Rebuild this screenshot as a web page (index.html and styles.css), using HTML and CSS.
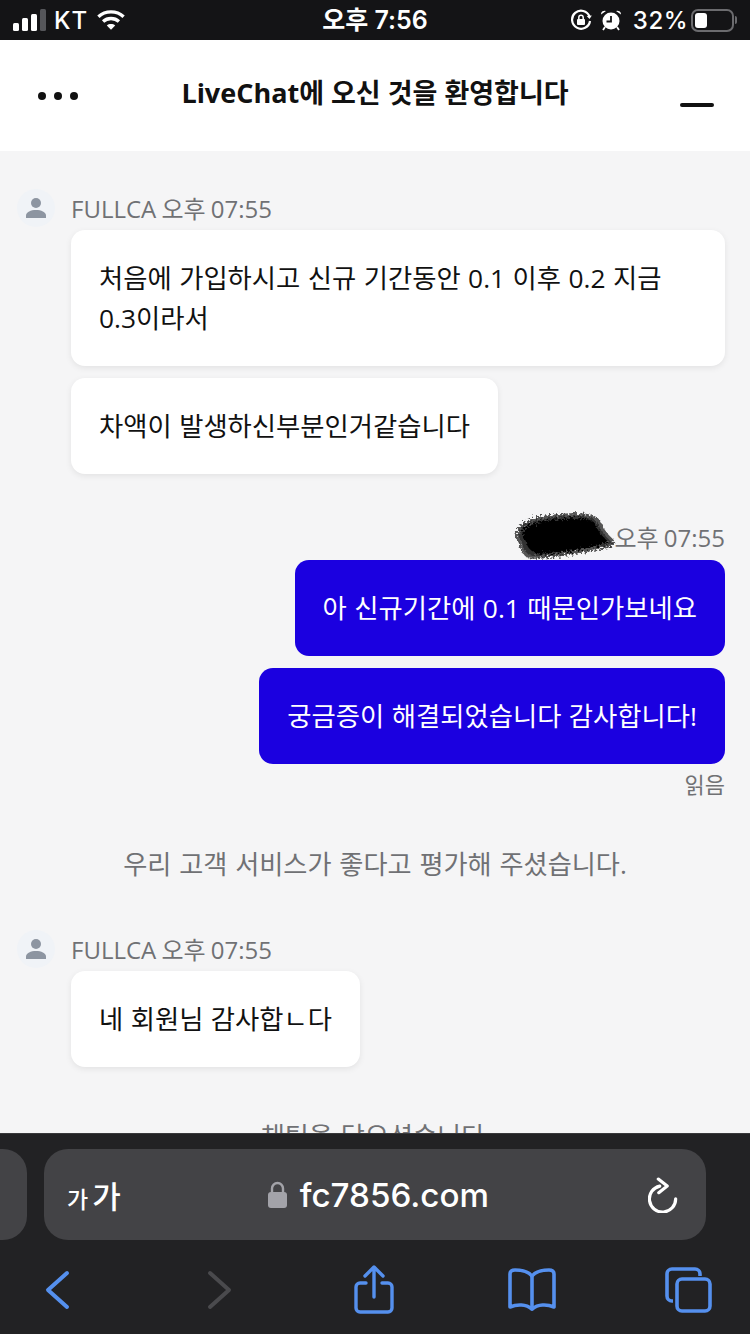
FILE: index.html
```html
<!DOCTYPE html>
<html lang="ko">
<head>
  <meta charset="UTF-8" />
  <title>LiveChat</title>
  <meta name="viewport" content="width=device-width, initial-scale=1.0" />
  <link rel="stylesheet" href="styles.css">
</head>
<body>
<div class="phone">

  <div class="status-bar">
    <div class="status-left">
      <svg class="signal" width="34" height="22" viewBox="0 0 34 22">
        <rect x="0" y="14" width="6" height="8" rx="1.5" fill="#fff"/>
        <rect x="9" y="9" width="6" height="13" rx="1.5" fill="#fff"/>
        <rect x="18" y="5" width="6" height="17" rx="1.5" fill="#fff"/>
        <rect x="27" y="0" width="6" height="22" rx="1.5" fill="#55565a"/>
      </svg>
      <span class="carrier">KT</span>
      <svg width="28" height="22" viewBox="0 0 30 22" fill="none" stroke="#fff" stroke-width="3.6">
        <path d="M1.5 7.5c7.500-7 19.500-7 27 0"/>
        <path d="M6.500 12.500c4.700-4.200 12.300-4.200 17 0"/>
        <path d="M15 21.500l-4.500-4.700c2.500-2 6.500-2 9 0z" fill="#fff" stroke="none"/>
      </svg>
    </div>
    <div class="status-time">오후 7:56</div>
    <div class="status-right">
      <svg width="22" height="22" viewBox="0 0 22 22" fill="none" stroke="#fff" stroke-width="2.200">
        <path d="M19.500 7.500A9 9 0 1 0 20 12"/>
        <path d="M21.800 6.500l-2.300 3.600-2.800-3.200z" fill="#fff" stroke="none"/>
        <rect x="7" y="10" width="8" height="6" rx="1" fill="#fff" stroke="none"/>
        <path d="M8.800 10V8.500a2.200 2.200 0 0 1 4.400 0V10" stroke-width="1.500"/>
      </svg>
      <svg width="22" height="22" viewBox="0 0 22 22">
        <circle cx="11" cy="12" r="8.500" fill="#fff"/>
        <path d="M11 7v5.500H6.500" fill="none" stroke="#141416" stroke-width="1.800"/>
        <path d="M1 5.500a3.600 3.600 0 0 1 5-3.500zM21 5.500a3.600 3.600 0 0 0-5-3.500z" fill="#fff"/>
        <path d="M5 18l-2 3M17 18l2 3" stroke="#fff" stroke-width="1.800"/>
      </svg>
      <span class="battery-pct">32%</span>
      <div class="battery"><div class="battery-level"></div></div>
      <div class="battery-cap"></div>
    </div>
  </div>

  <div class="chat-header">
    <div class="dots"><span></span><span></span><span></span></div>
    <h1 class="chat-title">LiveChat에 오신 것을 환영합니다</h1>
    <div class="minimize"></div>
  </div>

  <div class="chat-body">

    <div class="group">
      <div class="meta">
        <div class="avatar">
          <svg width="20" height="20" viewBox="0 0 20 20" fill="#8d95a1">
            <circle cx="10" cy="5" r="5"/>
            <path d="M0 20v-2.500c0-3.500 5-5.500 10-5.500s10 2 10 5.500V20z"/>
          </svg>
        </div>
        <span class="meta-text">FULLCA 오후 07:55</span>
      </div>
      <div class="bubble">처음에 가입하시고 신규 기간동안 0.1 이후 0.2 지금 0.3이라서</div>
      <div class="bubble">차액이 발생하신부분인거같습니다</div>
    </div>

    <div class="group group-me">
      <div class="meta meta-me">
        <svg class="scribble" width="110" height="54" viewBox="0 0 104 56" preserveAspectRatio="none">
          <defs>
            <filter id="rough" x="-10%" y="-10%" width="120%" height="120%">
              <feTurbulence type="fractalNoise" baseFrequency="0.5" numOctaves="2" seed="4"/>
              <feDisplacementMap in="SourceGraphic" scale="9"/>
            </filter>
          </defs>
          <path d="M6 20C10 10 30 6 50 5c14-1 24 0 30 5 3 8 6 14 14 22 2 5-8 7-20 9-16 3-40 9-56 8C10 48 8 40 7 34 3 30 3 25 6 20z" fill="#333" stroke="#555" stroke-width="3" filter="url(#rough)"/>
          <path d="M9 22C14 14 32 10 50 9c12-1 22 0 27 4 3 8 6 13 13 20-3 3-10 4-18 6-16 3-36 7-50 6-7-3-9-8-10-13-3-3-3-6-3-10z" fill="#050505" filter="url(#rough)"/>
        </svg>
        <span class="meta-text">오후 07:55</span>
      </div>
      <div class="bubble bubble-me">아 신규기간에 0.1 때문인가보네요</div>
      <div class="bubble bubble-me">궁금증이 해결되었습니다 감사합니다!</div>
      <div class="read-mark">읽음</div>
    </div>

    <div class="system-msg">우리 고객 서비스가 좋다고 평가해 주셨습니다.</div>

    <div class="group">
      <div class="meta">
        <div class="avatar">
          <svg width="20" height="20" viewBox="0 0 20 20" fill="#8d95a1">
            <circle cx="10" cy="5" r="5"/>
            <path d="M0 20v-2.500c0-3.500 5-5.500 10-5.500s10 2 10 5.500V20z"/>
          </svg>
        </div>
        <span class="meta-text">FULLCA 오후 07:55</span>
      </div>
      <div class="bubble">네 회원님 감사합ㄴ다</div>
    </div>

    <div class="system-msg system-closed">채팅을 닫으셨습니다</div>
  </div>

  <div class="browser-bar">
    <div class="url-row">
      <div class="prev-tab"></div>
      <div class="url-box">
        <span class="text-size"><small>가</small>가</span>
        <div class="url">
          <svg width="19" height="27" viewBox="0 0 19 27">
            <path d="M4 12V7.500a5.500 5.500 0 0 1 11 0V12" fill="none" stroke="#a3a3a9" stroke-width="2.400"/>
            <rect x="0" y="11" width="19" height="16" rx="3" fill="#a3a3a9"/>
          </svg>
          <span>fc7856.com</span>
        </div>
        <svg width="30" height="36" viewBox="0 0 32 38" fill="none" stroke="#fff" stroke-width="3.400" stroke-linecap="round" stroke-linejoin="round">
          <path d="M12.500 9.500A14 14 0 1 0 29.500 23"/>
          <path d="M11 2l9.500 7.500-9 7"/>
        </svg>
      </div>
    </div>
    <div class="tool-row">
      <svg class="tool-back" width="26" height="40" viewBox="0 0 26 40" fill="none" stroke="#5590ee" stroke-width="4" stroke-linecap="round" stroke-linejoin="round">
        <path d="M22 3L3 20l19 17"/>
      </svg>
      <svg class="tool-forward" width="26" height="40" viewBox="0 0 26 40" fill="none" stroke="#4a4a4d" stroke-width="4" stroke-linecap="round" stroke-linejoin="round">
        <path d="M4 3l19 17L4 37"/>
      </svg>
      <svg class="tool-share" width="40" height="50" viewBox="0 0 40 50" fill="none" stroke="#5590ee" stroke-width="3.400" stroke-linecap="round" stroke-linejoin="round">
        <path d="M12 18H6a4 4 0 0 0-4 4v21a4 4 0 0 0 4 4h28a4 4 0 0 0 4-4V22a4 4 0 0 0-4-4h-6"/>
        <path d="M20 32V3M11 11l9-9 9 9"/>
      </svg>
      <svg class="tool-book" width="50" height="44" viewBox="0 0 50 44" fill="none" stroke="#5590ee" stroke-width="3.600" stroke-linecap="round" stroke-linejoin="round">
        <path d="M25 8C21 3 15 2 8 2c-3 0-5 1-5 4v33c7-3 16-3 22 2 6-5 15-5 22-2V6c0-3-2-4-5-4-7 0-13 1-17 6z"/>
        <path d="M25 8v33"/>
      </svg>
      <svg class="tool-tabs" width="48" height="46" viewBox="0 0 48 46" fill="none" stroke="#5590ee" stroke-width="3.600" stroke-linejoin="round">
        <path d="M8 34H7a5 5 0 0 1-5-5V7a5 5 0 0 1 5-5h23a5 5 0 0 1 5 5v2"/>
        <rect x="12" y="12" width="33" height="32" rx="5"/>
      </svg>
    </div>
  </div>

</div>
</body>
</html>
```

FILE: styles.css
```css
* { box-sizing: border-box; }
body {
  margin: 0;
  font-family: "Open Sans", "Noto Sans CJK KR", sans-serif;
  background: #f5f5f6;
}
.phone {
  width: 750px;
  height: 1334px;
  display: flex;
  flex-direction: column;
  overflow: hidden;
}

/* status bar */
.status-bar {
  height: 40px;
  flex: none;
  background: #141416;
  color: #fff;
  display: flex;
  align-items: center;
  justify-content: space-between;
  padding: 0 13px;
  font-family: Inter, "Noto Sans CJK KR", sans-serif;
  font-size: 24px;
  font-weight: 500;
  position: relative;
}
.status-left { display: flex; align-items: center; gap: 7px; }
.carrier { letter-spacing: 1px; margin-right: 2px; }
.status-time {
  position: absolute;
  left: 0;
  right: 0;
  top: 3px;
  text-align: center;
  font-size: 25px;
  font-weight: 600;
  line-height: 34px;
}
.status-right { display: flex; align-items: center; gap: 8px; }
.battery-pct { margin-left: 3px; letter-spacing: 0.5px; }
.battery {
  width: 43px;
  height: 23px;
  border: 2px solid #6b6b6e;
  border-radius: 7px;
  padding: 2px;
  margin-left: -5px;
}
.battery-level { width: 12px; height: 100%; background: #fff; border-radius: 3px; }
.battery-cap {
  width: 2px;
  height: 8px;
  background: #6b6b6e;
  border-radius: 0 2px 2px 0;
  margin-left: -7px;
}

/* livechat header */
.chat-header {
  height: 111px;
  flex: none;
  background: #fff;
  display: flex;
  align-items: center;
  justify-content: space-between;
  padding: 0 36px 0 38px;
}
.dots { display: flex; gap: 8px; }
.dots span { width: 8px; height: 8px; border-radius: 50%; background: #111; }
.chat-title {
  margin: 0 8px 5px 0;
  font-size: 27px;
  font-weight: 700;
  color: #111;
  line-height: 36px;
}
.minimize {
  width: 34px;
  height: 4px;
  border-radius: 2px;
  background: #111;
  margin-top: 19px;
}

/* messages */
.chat-body {
  flex: 1;
  min-height: 0;
  overflow: hidden;
  background: #f5f5f6;
  padding: 37px 25px 0 17px;
}
.group { display: flex; flex-direction: column; align-items: flex-start; }
.group-me { align-items: flex-end; margin-top: 22px; }
.meta {
  display: flex;
  align-items: center;
  gap: 16px;
  height: 42px;
  font-size: 24px;
  color: #707174;
  white-space: nowrap;
}
.meta-text { margin-top: -4px; word-spacing: -1px; }
.meta-me { gap: 0; height: 52px; padding-top: 4px; }
.meta-me .meta-text { margin-top: 0; }
.scribble { margin-right: -9px; margin-top: 2px; }
.avatar {
  width: 38px;
  height: 38px;
  border-radius: 50%;
  background: #f0f3f7;
  display: flex;
  align-items: center;
  justify-content: center;
  margin-top: -2px;
}
.bubble {
  margin-left: 54px;
  margin-bottom: 12px;
  padding: 28px;
  background: #fff;
  color: #111;
  border-radius: 14px;
  box-shadow: 0 2px 6px rgba(0, 0, 0, 0.08);
  font-size: 26.35px;
  word-spacing: 0.6px;
  line-height: 40px;
}
.bubble-me {
  background: #1b00e0;
  color: #fff;
  margin-left: 0;
  box-shadow: none;
}
.read-mark { font-size: 22px; line-height: 30px; color: #707174; margin-top: -7px; }
.system-msg {
  margin: 45px 0 0 8px;
  text-align: center;
  font-size: 26.2px;
  word-spacing: 1px;
  line-height: 40px;
  color: #707174;
}
.system-closed { margin-top: 37px; margin-left: 4px; }
.system-msg + .group { margin-top: 45px; }

/* safari bottom bar */
.browser-bar {
  height: 201px;
  flex: none;
  background: #222224;
  border-top: 1px solid #39393b;
  padding-top: 15px;
}
.url-row { display: flex; gap: 17px; }
.prev-tab {
  width: 27px;
  height: 91px;
  flex: none;
  background: #434346;
  border-radius: 0 24px 24px 0;
}
.url-box {
  width: 662px;
  height: 91px;
  background: #434346;
  border-radius: 24px;
  display: flex;
  align-items: center;
  justify-content: space-between;
  padding: 0 28px 0 23px;
  color: #fff;
}
.text-size {
  font-family: "Noto Sans CJK KR", sans-serif;
  font-size: 31px;
  font-weight: 500;
  line-height: 1;
}
.text-size small { font-size: 23px; margin-right: 4px; }
.url {
  display: flex;
  align-items: center;
  gap: 13px;
  font-family: Inter, "Liberation Sans", sans-serif;
  font-size: 33.2px;
  font-weight: 500;
  margin-left: -12px;
}
.tool-row {
  display: flex;
  align-items: center;
  height: 50px;
  margin-top: 25px;
  padding-left: 45px;
}
.tool-row svg { flex: none; }
.tool-forward { margin-left: 135px; }
.tool-share { margin-left: 122px; }
.tool-book { margin-left: 113px; }
.tool-tabs { margin-left: 108px; }
```
